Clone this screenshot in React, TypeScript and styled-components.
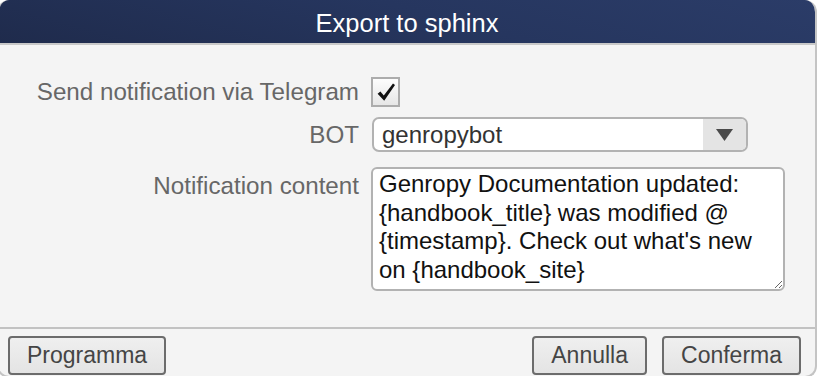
import React from 'react';
import styled, { createGlobalStyle } from 'styled-components';

const GlobalStyle = createGlobalStyle`
  html, body {
    margin: 0;
    padding: 0;
    overflow: hidden;
    background: #ffffff;
  }
  body {
    font-family: 'Liberation Sans', Arial, Helvetica, sans-serif;
  }
`;

const App = () => {
  return (
    <>
      <GlobalStyle />
      <Dialog>
        <TitleBar>Export to sphinx</TitleBar>
        <Body>
          <Form>
            <Label>Send notification via Telegram</Label>
            <CheckBox>
              <svg width="22" height="22" viewBox="0 0 22 22">
                <path
                  d="M2.6 12.8 L5.4 10.4 L8.8 14.6 L18 2.4 L20 4 L9.2 19.8 Z"
                  fill="#111"
                />
              </svg>
            </CheckBox>

            <Label>BOT</Label>
            <Select>
              <SelectValue>genropybot</SelectValue>
              <SelectArrow>
                <svg width="17" height="12" viewBox="0 0 17 12">
                  <path d="M0 0 H17 L8.5 12 Z" fill="#4a4a4a" />
                </svg>
              </SelectArrow>
            </Select>

            <Label $top>Notification content</Label>
            <TextArea
              readOnly
              defaultValue="Genropy Documentation updated: {handbook_title} was modified @ {timestamp}. Check out what's new on {handbook_site}"
            />
          </Form>
        </Body>
        <Footer>
          <Button>Programma</Button>
          <ButtonGroup>
            <Button>Annulla</Button>
            <Button>Conferma</Button>
          </ButtonGroup>
        </Footer>
      </Dialog>
    </>
  );
};

export default App;

const Dialog = styled.div`
  width: 820px;
  height: 378px;
  margin-left: -3px;
  box-sizing: border-box;
  border: 2px solid #c4c4c4;
  border-top: none;
  border-radius: 12px;
  overflow: hidden;
  background: #f4f4f4;
  display: flex;
  flex-direction: column;
`;

const TitleBar = styled.div`
  height: 43px;
  flex-shrink: 0;
  box-sizing: content-box;
  padding-top: 0;
  background: linear-gradient(15deg, #1f2b4c 0%, #26365f 55%, #2b3c68 100%);
  border-bottom: 2px solid #c8c8c8;
  color: #ffffff;
  font-size: 25.5px;
  line-height: 47px;
  overflow: hidden;
  text-align: center;
`;

const Body = styled.div`
  flex: 1;
  padding-top: 32px;
  border-bottom: 2px solid #c2c2c2;
`;

const Form = styled.div`
  display: grid;
  grid-template-columns: 360px auto;
  column-gap: 12px;
  row-gap: 10px;
  justify-content: start;
`;

const Label = styled.div<{ $top?: boolean }>`
  font-size: 24.2px;
  color: #676767;
  text-align: right;
  white-space: nowrap;
  align-self: ${(p) => (p.$top ? 'start' : 'center')};
  padding-top: ${(p) => (p.$top ? '10px' : '0')};
  line-height: 28px;
`;

const CheckBox = styled.div`
  width: 29px;
  height: 30px;
  box-sizing: border-box;
  border: 2px solid #acacac;
  background: linear-gradient(#fdfdfd, #e6e6e6);
  display: flex;
  align-items: center;
  justify-content: center;
`;

const Select = styled.div`
  width: 376px;
  height: 35px;
  margin-left: 1px;
  box-sizing: border-box;
  border: 2px solid #b2b2b2;
  border-radius: 7px;
  background: #ffffff;
  display: flex;
  overflow: hidden;
`;

const SelectValue = styled.div`
  flex: 1;
  padding-left: 8px;
  font-size: 24px;
  line-height: 31px;
  color: #333333;
`;

const SelectArrow = styled.div`
  width: 43px;
  background: #e4e4e4;
  display: flex;
  align-items: center;
  justify-content: center;
`;

const TextArea = styled.textarea`
  width: 414px;
  height: 124px;
  margin-top: 5px;
  box-sizing: border-box;
  border: 2px solid #b2b2b2;
  border-radius: 6px;
  background: #ffffff;
  padding: 1px 8px 2px 6px;
  font-family: 'Liberation Sans', Arial, Helvetica, sans-serif;
  font-size: 24px;
  line-height: 28.5px;
  color: #111111;
  outline: none;
  overflow: hidden;
`;

const Footer = styled.div`
  flex-shrink: 0;
  height: 47px;
  display: flex;
  justify-content: space-between;
  align-items: flex-start;
  padding: 7px 14px 0 9px;
  box-sizing: border-box;
`;

const ButtonGroup = styled.div`
  display: flex;
  gap: 15px;
`;

const Button = styled.button`
  height: 39px;
  box-sizing: border-box;
  padding: 0 17px;
  border: 2px solid #6c6c6c;
  border-radius: 4px;
  background: linear-gradient(#efefef, #e4e4e4);
  font-family: 'Liberation Sans', Arial, Helvetica, sans-serif;
  font-size: 23px;
  color: #454545;
  cursor: pointer;
`;
